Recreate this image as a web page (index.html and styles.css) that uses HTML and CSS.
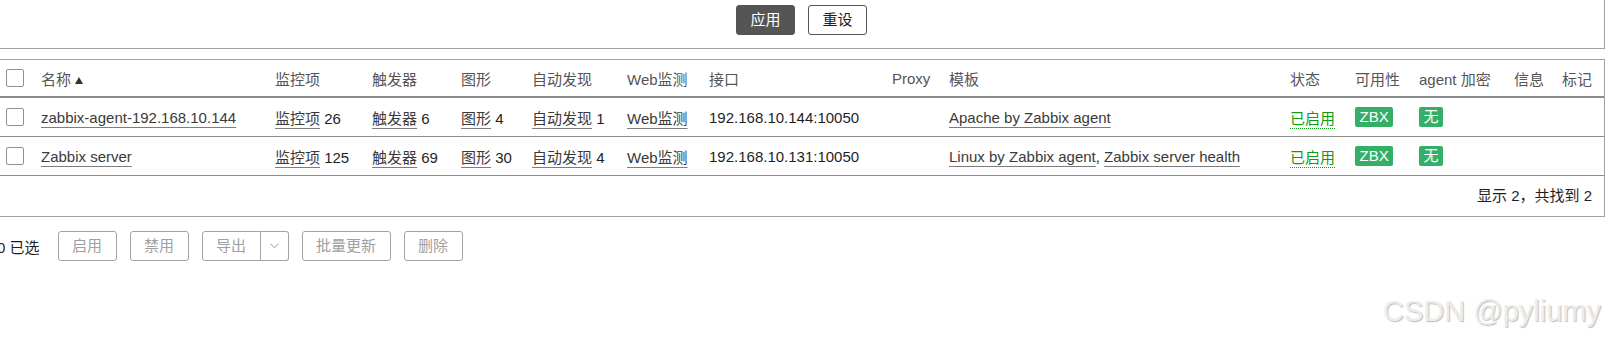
FILE: index.html
```html
<!DOCTYPE html>
<html lang="zh-CN">
<head>
  <meta charset="UTF-8" />
  <meta name="viewport" content="width=device-width, initial-scale=1.0"/>
  <title>主机</title>
  <link rel="stylesheet" href="styles.css">
</head>
<body>
  <div class="page">
    <!-- Filter -->
    <div class="filter">
      <div class="filter-buttons">
        <button class="btn btn-main">应用</button>
        <button class="btn btn-alt">重设</button>
      </div>
    </div>

    <!-- Host list -->
    <div class="list-panel">
      <table class="list-table">
        <colgroup>
          <col style="width: 60px">
          <col style="width: 234px">
          <col style="width: 97px">
          <col style="width: 89px">
          <col style="width: 71px">
          <col style="width: 95px">
          <col style="width: 82px">
          <col style="width: 183px">
          <col style="width: 57px">
          <col style="width: 341px">
          <col style="width: 65px">
          <col style="width: 64px">
          <col style="width: 95px">
          <col style="width: 48px">
          <col>
        </colgroup>
        <thead>
          <tr>
            <th class="cell-check"><input type="checkbox" class="check"></th>
            <th class="sorted">名称<span class="arrow-up"></span></th>
            <th>监控项</th>
            <th>触发器</th>
            <th>图形</th>
            <th>自动发现</th>
            <th>Web监测</th>
            <th>接口</th>
            <th>Proxy</th>
            <th>模板</th>
            <th>状态</th>
            <th>可用性</th>
            <th>agent 加密</th>
            <th>信息</th>
            <th>标记</th>
          </tr>
        </thead>
        <tbody>
          <tr>
            <td class="cell-check"><input type="checkbox" class="check"></td>
            <td><a class="link" href="#">zabbix-agent-192.168.10.144</a></td>
            <td><a class="link" href="#">监控项</a> 26</td>
            <td><a class="link" href="#">触发器</a> 6</td>
            <td><a class="link" href="#">图形</a> 4</td>
            <td><a class="link" href="#">自动发现</a> 1</td>
            <td><a class="link" href="#">Web监测</a></td>
            <td>192.168.10.144:10050</td>
            <td></td>
            <td><a class="link" href="#">Apache by Zabbix agent</a></td>
            <td><a class="status-on" href="#">已启用</a></td>
            <td><span class="badge">ZBX</span></td>
            <td><span class="badge">无</span></td>
            <td></td>
            <td></td>
          </tr>
          <tr>
            <td class="cell-check"><input type="checkbox" class="check"></td>
            <td><a class="link" href="#">Zabbix server</a></td>
            <td><a class="link" href="#">监控项</a> 125</td>
            <td><a class="link" href="#">触发器</a> 69</td>
            <td><a class="link" href="#">图形</a> 30</td>
            <td><a class="link" href="#">自动发现</a> 4</td>
            <td><a class="link" href="#">Web监测</a></td>
            <td>192.168.10.131:10050</td>
            <td></td>
            <td><a class="link" href="#">Linux by Zabbix agent</a>, <a class="link" href="#">Zabbix server health</a></td>
            <td><a class="status-on" href="#">已启用</a></td>
            <td><span class="badge">ZBX</span></td>
            <td><span class="badge">无</span></td>
            <td></td>
            <td></td>
          </tr>
        </tbody>
      </table>
      <div class="table-stats">显示 2，共找到 2</div>
    </div>

    <!-- Mass actions -->
    <div class="actions">
      <span class="selected-count">0 已选</span>
      <button class="btn btn-off">启用</button>
      <button class="btn btn-off">禁用</button>
      <div class="btn-split">
        <button class="btn btn-off split-main">导出</button>
        <button class="btn btn-off split-toggle">
          <svg width="9" height="6" viewBox="0 0 9 6"><polyline points="0.5,0.8 4.5,4.8 8.5,0.8" fill="none" stroke="#9a9a9a" stroke-width="1"/></svg>
        </button>
      </div>
      <button class="btn btn-off">批量更新</button>
      <button class="btn btn-off">删除</button>
    </div>
  </div>

  <div class="watermark">CSDN @pyliumy</div>
</body>
</html>
```

FILE: styles.css
```css
/* Base */
body {
  margin: 0;
  background: #ffffff;
  color: #1f1f1f;
  font-family: "Liberation Sans", Arial, "Noto Sans CJK SC", sans-serif;
  font-size: 15px;
  overflow: hidden;
}

.page {
  margin-left: -20px;
  width: 1625px;
}

/* Buttons */
.btn {
  height: 30px;
  padding: 0 13.5px;
  border-radius: 3px;
  font-family: inherit;
  font-size: 15px;
  line-height: 28px;
  cursor: pointer;
}

.btn-main {
  background: #555555;
  border: 1px solid #555555;
  color: #ffffff;
}

.btn-alt {
  background: #ffffff;
  border: 1px solid #555555;
  color: #1f1f1f;
}

.btn-off {
  background: #ffffff;
  border: 1px solid #a3a3a3;
  color: #a0a0a0;
}

/* Filter */
.filter {
  box-sizing: border-box;
  border: 1px solid #a0a0a0;
  border-top: none;
  padding: 5px 0 13px;
}

.filter-buttons {
  display: flex;
  justify-content: center;
  gap: 13px;
  padding-left: 18px;
}

/* List panel */
.list-panel {
  box-sizing: border-box;
  margin-top: 10px;
  border: 1px solid #a0a0a0;
}

.list-table {
  width: 100%;
  table-layout: fixed;
  border-collapse: collapse;
}

.list-table th,
.list-table td {
  padding: 0;
  text-align: left;
  white-space: nowrap;
  vertical-align: middle;
}

.list-table th {
  height: 36px;
  font-weight: normal;
  color: #555555;
  border-bottom: 2px solid #8c8c8c;
}

.list-table td {
  height: 38px;
  border-bottom: 1px solid #8c8c8c;
}

.list-table .cell-check {
  padding-left: 25px;
}

.check {
  appearance: none;
  -webkit-appearance: none;
  display: block;
  box-sizing: border-box;
  width: 18px;
  height: 18px;
  margin: 0;
  border: 1px solid #8f8f8f;
  border-radius: 2px;
  background: #ffffff;
}

.arrow-up {
  display: inline-block;
  width: 0;
  height: 0;
  margin-left: 4px;
  vertical-align: 1px;
  border-left: 4px solid transparent;
  border-right: 4px solid transparent;
  border-bottom: 7px solid #333333;
}

.link {
  color: #3a3a3a;
  text-decoration: underline;
  text-decoration-color: #7d7d7d;
  text-decoration-thickness: 1px;
  text-underline-offset: 4px;
}

.status-on {
  color: #119c11;
  text-decoration: underline dotted;
  text-decoration-color: #119c11;
  text-decoration-thickness: 1px;
  text-underline-offset: 4px;
}

.badge {
  display: inline-block;
  height: 20px;
  padding: 0 4.5px;
  border-radius: 2px;
  background: #34af67;
  color: #ffffff;
  font-size: 15px;
  line-height: 20px;
  vertical-align: middle;
}

.table-stats {
  height: 40px;
  line-height: 40px;
  text-align: right;
  padding-right: 12px;
}

/* Mass actions */
.actions {
  display: flex;
  align-items: center;
  gap: 13px;
  margin-top: 14px;
  padding-left: 17px;
}

.selected-count {
  margin-right: 5px;
}

.btn-split {
  display: flex;
}

.split-main {
  border-top-right-radius: 0;
  border-bottom-right-radius: 0;
}

.split-toggle {
  width: 28px;
  padding: 0;
  border-left: none;
  border-top-left-radius: 0;
  border-bottom-left-radius: 0;
  display: flex;
  align-items: center;
  justify-content: center;
}

/* Watermark */
.watermark {
  position: absolute;
  left: 1383px;
  top: 297px;
  font-family: "Liberation Sans", Arial, sans-serif;
  font-size: 29px;
  line-height: 1;
  color: #ececec;
  text-shadow: 1px 1px 1px #bdbdbd;
  white-space: nowrap;
}
```
